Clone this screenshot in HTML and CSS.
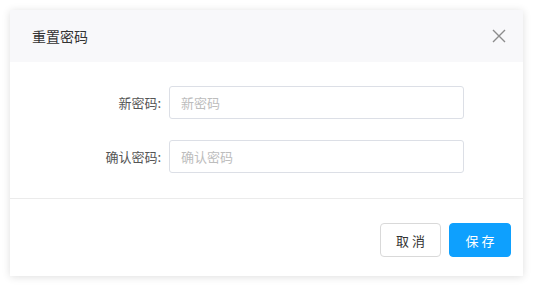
FILE: index.html
```html
<!DOCTYPE html>
<html lang="zh">
<head>
<meta charset="utf-8">
<link rel="stylesheet" href="styles.css">
</head>
<body>
<div class="dialog">
  <div class="header">
    <span class="title">重置密码</span>
    <svg class="close" width="14" height="14" viewBox="0 0 14 14"><path d="M1 1L13 13M13 1L1 13" stroke="#8c8c8c" stroke-width="1.4" fill="none"/></svg>
  </div>
  <div class="body">
    <div class="row">
      <label class="label">新密码:</label>
      <input class="input" type="password" placeholder="新密码">
    </div>
    <div class="row">
      <label class="label">确认密码:</label>
      <input class="input" type="password" placeholder="确认密码">
    </div>
  </div>
  <div class="footer">
    <button class="btn btn-default">取 消</button>
    <button class="btn btn-primary">保 存</button>
  </div>
</div>
</body>
</html>
```
FILE: styles.css
```css
html, body {
  margin: 0;
  padding: 0;
  background: #ffffff;
  font-family: "Noto Sans CJK SC", "Noto Sans", sans-serif;
}
body {
  padding: 10px;
}
.dialog {
  width: 513px;
  height: 266px;
  background: #fff;
  box-shadow: 0 1px 8px rgba(0, 0, 0, 0.13);
  display: flex;
  flex-direction: column;
}
.header {
  height: 52px;
  background: #f8f8fa;
  display: flex;
  align-items: center;
  justify-content: space-between;
  padding: 0 17px 0 22px;
}
.title {
  font-size: 14px;
  color: #333;
}
.close {
  display: block;
}
.body {
  padding: 24px 0 25px;
  border-bottom: 1px solid #ebebeb;
  display: flex;
  flex-direction: column;
  gap: 21px;
}
.row {
  display: flex;
  align-items: center;
}
.label {
  width: 151px;
  text-align: right;
  font-size: 13px;
  color: #555;
  margin-right: 8px;
}
.input {
  width: 295px;
  height: 33px;
  box-sizing: border-box;
  border: 1px solid #dcdfe6;
  border-radius: 3px;
  padding: 0 11px;
  font-size: 13px;
  font-family: inherit;
  outline: none;
}
.input::placeholder {
  color: #bdbdbd;
}
.footer {
  display: flex;
  justify-content: flex-end;
  gap: 8px;
  padding: 24px 12px 0 0;
}
.btn {
  height: 34px;
  box-sizing: border-box;
  border-radius: 4px;
  font-size: 13px;
  font-family: inherit;
  cursor: pointer;
}
.btn-default {
  width: 61px;
  background: #fff;
  border: 1px solid #d9d9d9;
  color: #333;
}
.btn-primary {
  width: 62px;
  background: #0ea0fe;
  border: 1px solid #0ea0fe;
  color: #fff;
}
```
